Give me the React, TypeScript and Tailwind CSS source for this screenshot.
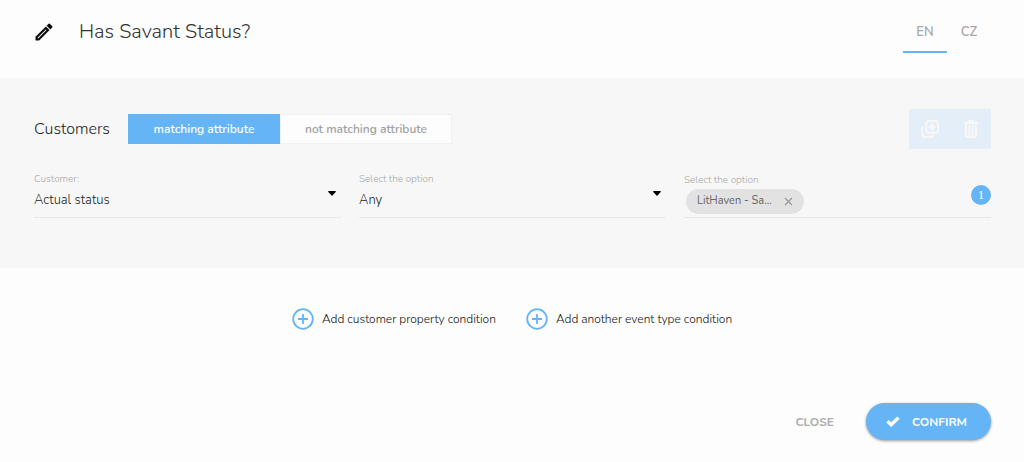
import React, { useState } from 'react';

type Lang = 'EN' | 'CZ';

// --- ICONS ---

const PencilIcon = () => (
  <svg viewBox="0 0 24 24" className="h-[22px] w-[22px]" fill="currentColor" stroke="currentColor" strokeWidth="0.4">
    <path d="M14.06 9l.94.940L5.920 19H5v-.920L14.060 9m3.600-6c-.250 0-.510.100-.700.290l-1.830 1.830 3.750 3.750 1.830-1.830c.390-.390.390-1.040 0-1.410l-2.340-2.340c-.200-.200-.450-.290-.710-.290m-3.600 3.190L3 17.250V21h3.750L17.810 9.940l-3.750-3.750z" />
  </svg>
);

const DuplicateIcon = () => (
  <svg viewBox="0 0 18 18" className="h-[18px] w-[18px]" fill="none" stroke="currentColor" strokeWidth="2.2" strokeLinecap="round">
    <rect x="5.2" y="1.1" width="11.7" height="11.7" rx="2.6" />
    <path d="M11.1 4.6v4.8M8.7 7h4.8" strokeWidth="2.4" />
    <path d="M1.1 7.5v6.2a3.2 3.2 0 0 0 3.2 3.2h6.2c1 0 1.6-.6 1.6-1.4" />
  </svg>
);

const TrashIcon = () => (
  <svg viewBox="0 0 16 18" className="h-[18px] w-4" fill="none" stroke="currentColor">
    <path d="M1 3h14M5 1.3h6" strokeWidth="2.6" />
    <path d="M3 5v10.3c0 .9.6 1.5 1.5 1.5h7c.9 0 1.5-.6 1.5-1.5V5" strokeWidth="2.4" />
    <path d="M6.4 5v10M9.6 5v10" strokeWidth="2" />
  </svg>
);

const PlusCircleIcon = () => (
  <svg viewBox="0 0 22 22" className="h-[22px] w-[22px] text-[#64b4f6]" fill="none" stroke="currentColor">
    <circle cx="11" cy="11" r="9.8" strokeWidth="1.8" />
    <path d="M11 6v10M6 11h10" strokeWidth="1.8" />
  </svg>
);

const CheckIcon = () => (
  <svg viewBox="0 0 14 11" className="h-[11px] w-[14px]" fill="none" stroke="currentColor" strokeWidth="3.4">
    <path d="M1.5 5.2l3.7 3.5 7.3-7" />
  </svg>
);

// --- FIELDS ---

const SelectField = ({ id, label, options }: { id: string; label: string; options: string[] }) => (
  <div className="flex flex-col border-b border-[#e8e8e8]">
    <label htmlFor={id} className="text-[10px] leading-3 font-light text-[#a8a8a8]">{label}</label>
    <div className="relative">
      <select id={id} className="h-8 w-full appearance-none bg-transparent text-[13px] font-light text-[#222] outline-none">
        {options.map((option) => (
          <option key={option}>{option}</option>
        ))}
      </select>
      <svg viewBox="0 0 8 5" className="pointer-events-none absolute top-1.5 right-[5px] h-[5px] w-2 text-black" fill="currentColor">
        <path d="M.8 0h6.4c.6 0 .9.7.5 1.1L4.5 4.6a.7.7 0 0 1-1 0L.3 1.1C-.1.7.2 0 .8 0z" />
      </svg>
    </div>
  </div>
);

const AddButton = ({ label }: { label: string }) => (
  <button type="button" className="flex items-center gap-2 text-xs font-light text-[#111]">
    <PlusCircleIcon />
    {label}
  </button>
);

// --- PAGE ---

export default function App() {
  const [lang, setLang] = useState<Lang>('EN');
  const [matching, setMatching] = useState(true);

  return (
    <div className="min-h-screen bg-[#fdfdfd] font-['Nunito','Open_Sans',sans-serif] text-[#333]">
      <header className="flex h-[78px] items-start justify-between px-[33px] pt-3">
        <div className="flex h-10 items-center gap-6">
          <button type="button" aria-label="Edit name" className="text-black">
            <PencilIcon />
          </button>
          <h1 className="text-xl font-light">Has Savant Status?</h1>
        </div>
        <nav className="flex">
          {(['EN', 'CZ'] as Lang[]).map((item) => (
            <button
              key={item}
              type="button"
              onClick={() => setLang(item)}
              className={`h-[41px] w-11 border-b-2 pt-0.5 text-[13px] font-semibold text-[#a8a8a8] ${lang === item ? 'border-[#64b4f6]' : 'border-transparent'}`}
            >
              {item}
            </button>
          ))}
        </nav>
      </header>

      <section className="h-[190px] bg-[#f7f7f7] pt-[31px] pr-[33px] pl-[34px]">
        <div className="flex h-10 items-center">
          <h2 className="w-[94px] text-base font-light text-[#222]">Customers</h2>
          <div className="flex h-[30px] text-xs font-semibold">
            <button
              type="button"
              onClick={() => setMatching(true)}
              className={`w-[152px] ${matching ? 'bg-[#64b4f6] text-white' : 'border border-[#f0f0f0] bg-[#fdfdfd] text-[#a0a0a0]'}`}
            >
              matching attribute
            </button>
            <button
              type="button"
              onClick={() => setMatching(false)}
              className={`w-[172px] ${matching ? 'border border-[#f0f0f0] bg-[#fdfdfd] text-[#a0a0a0]' : 'bg-[#64b4f6] text-white'}`}
            >
              not matching attribute
            </button>
          </div>
          <div className="ml-auto flex h-10 bg-[#e3eef8] text-[#f7f7f7]">
            <button type="button" aria-label="Duplicate" className="flex w-[41px] items-center justify-center">
              <DuplicateIcon />
            </button>
            <button type="button" aria-label="Delete" className="flex w-[41px] items-center justify-center">
              <TrashIcon />
            </button>
          </div>
        </div>

        <div className="mt-6 grid grid-cols-3 gap-[18px]">
          <SelectField id="customer" label="Customer:" options={['Actual status']} />
          <SelectField id="operator" label="Select the option" options={['Any']} />
          <div className="flex items-start justify-between border-b border-[#e8e8e8]">
            <div className="flex flex-col gap-0.5">
              <span className="text-[10px] leading-[14px] font-light text-[#a8a8a8]">Select the option</span>
              <div className="ml-0.5 flex h-[25px] w-[118px] items-center justify-between rounded-full bg-[#e2e2e2] px-[11px] text-[11px] text-[#666]">
                LitHaven - Sa...
                <button type="button" aria-label="Remove" className="text-[#999]">
                  <svg viewBox="0 0 9 9" className="h-[9px] w-[9px]" stroke="currentColor" strokeWidth="1.2">
                    <path d="M1 1l7 7M8 1L1 8" />
                  </svg>
                </button>
              </div>
            </div>
            <span className="flex h-5 w-5 items-center justify-center self-center rounded-full bg-[#64b4f6] font-['Liberation_Serif',serif] text-[13px] text-white">1</span>
          </div>
        </div>
      </section>

      <div className="flex justify-center gap-[30px] pt-10">
        <AddButton label="Add customer property condition" />
        <AddButton label="Add another event type condition" />
      </div>

      <footer className="flex items-center justify-end gap-8 px-[33px] pt-[73px] text-xs font-bold">
        <button type="button" className="text-[#adadad]">CLOSE</button>
        <button type="button" className="flex h-[37px] w-[125px] items-center justify-center gap-3 rounded-full bg-[#64b4f6] pr-1 text-white shadow-[0_1px_3px_rgba(0,0,0,0.4)]">
          <CheckIcon />
          CONFIRM
        </button>
      </footer>
    </div>
  );
}
